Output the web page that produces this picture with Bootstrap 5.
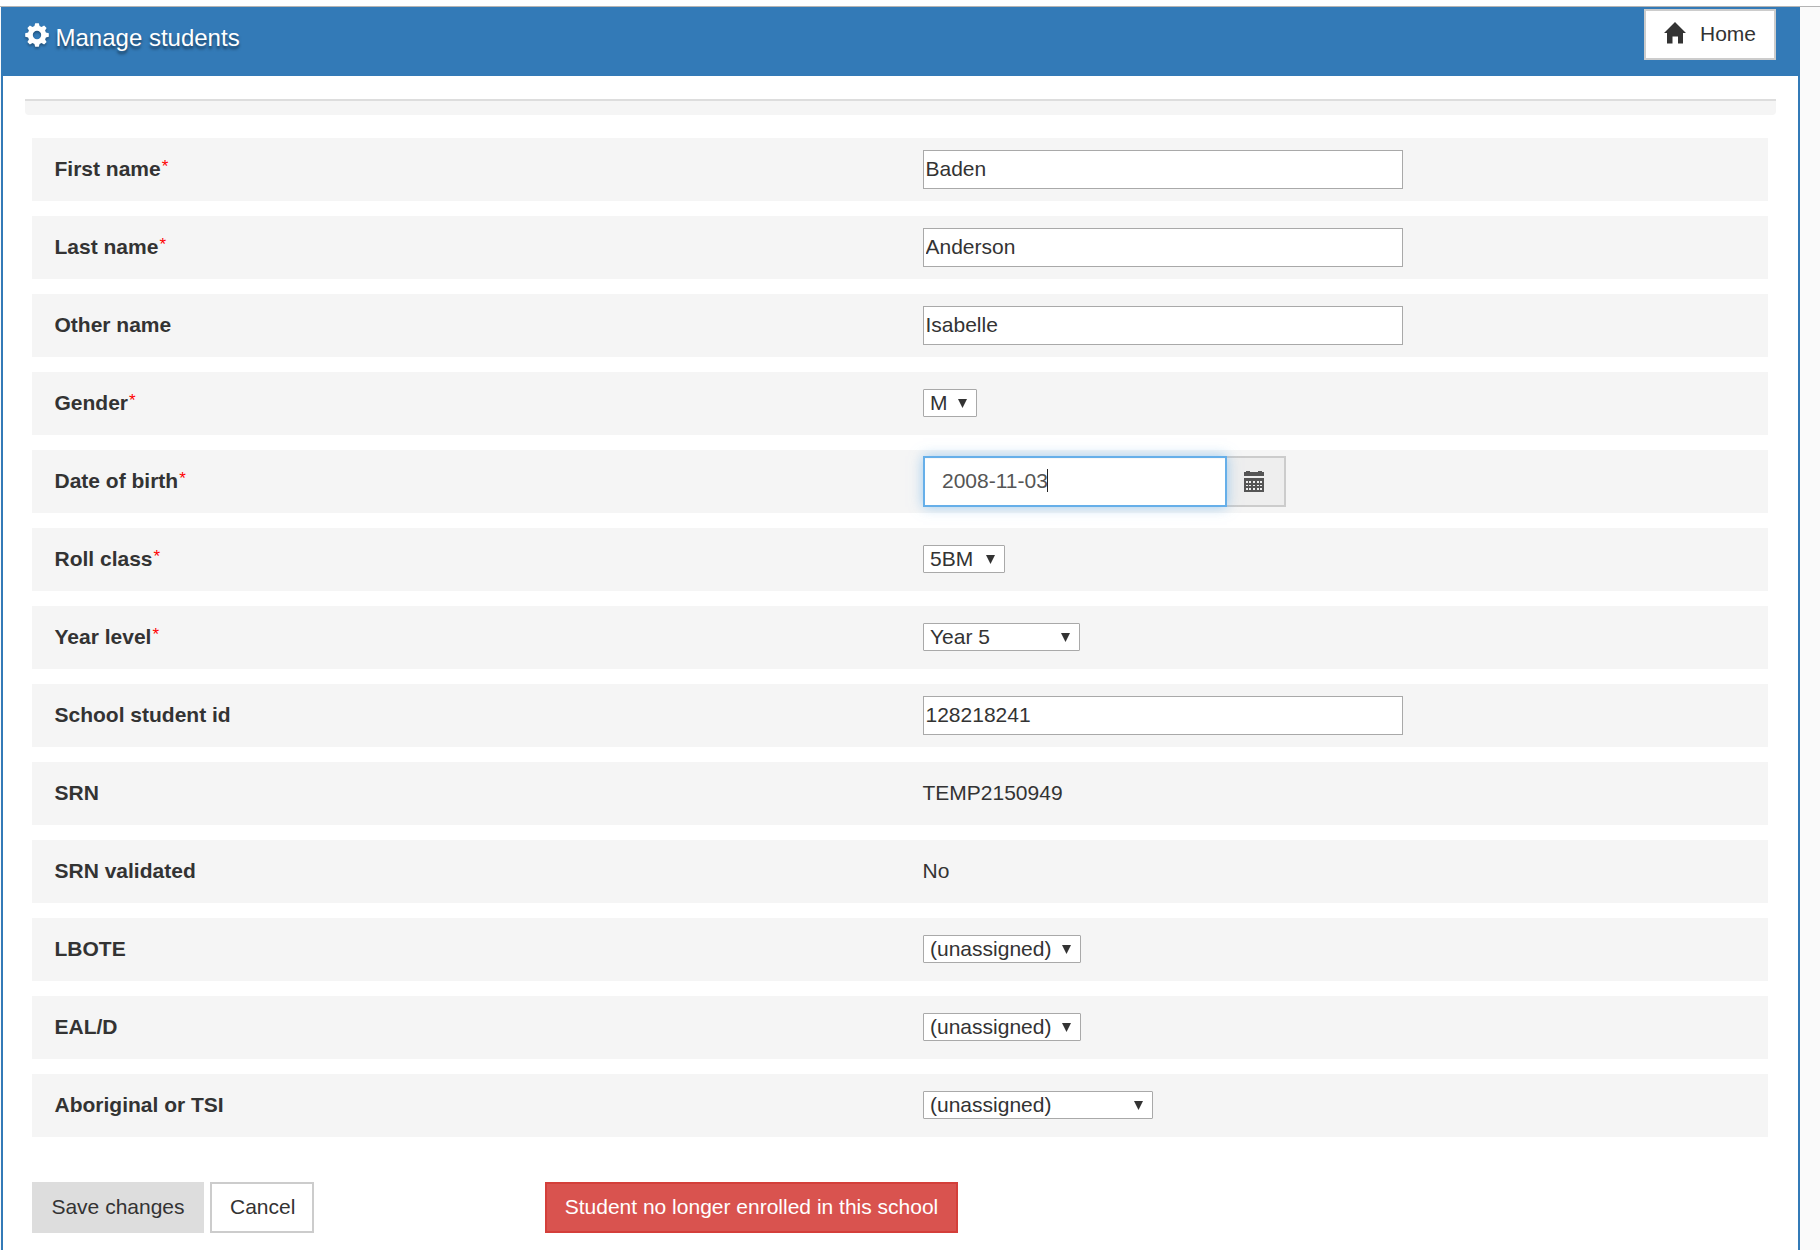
<!DOCTYPE html>
<html lang="en">
<head>
<meta charset="utf-8">
<title>Manage students</title>
<link href="https://cdn.jsdelivr.net/npm/bootstrap@5.3.0/dist/css/bootstrap.min.css" rel="stylesheet">
<style>
body{font-family:"Liberation Sans",Arial,sans-serif;font-size:21px;line-height:30px;color:#333;background:#fafafa;height:1250px;overflow:hidden}
.top-rule{height:7px;background:#fff;border-bottom:1px solid #b4b4b4}
.panel{width:1799px;height:1243px;margin-left:1px;border:2px solid #337ab7;border-top:0;border-bottom:0;background:#fff}
.panel-head{height:69px;background:#337ab7;padding:2px 22px 0}
.panel-title{font-size:24px;line-height:30px;color:#fff;margin-top:14px;text-shadow:0 3px 3px rgba(0,0,0,.5)}
.panel-title svg{filter:drop-shadow(0 2px 1px rgba(0,0,0,.3));margin-right:7px;margin-left:-.5px}
.strip{height:16px;margin:23px 22px 23px;border-top:2px solid #ddd;background:#f5f5f5;border-radius:0 0 4px 4px}
.fields{margin:0 30px 0 29px;gap:15px}
.field-row{height:63px;background:#f5f5f5;--bs-gutter-x:45px}
.field-row label,.field-row .name{font-weight:700}
.field-row label,.field-row .name,.field-row .plain{display:block;margin-bottom:2px}
.req::after{content:"*";color:red;font-weight:400;font-size:17px;line-height:0;margin-left:1px;position:relative;top:-4px}
.txt{width:480px;height:39px;border:1px solid #a9a9a9;padding:0 2px 2px;color:#333;background:#fff;display:block}
.pick{display:inline-grid;vertical-align:top;height:28px;margin-bottom:1px}
.pick>*{grid-area:1/1}
.pick select{appearance:none;height:28px;border:1px solid #a9a9a9;border-radius:1px;background:#fff;color:#333;padding:0 6.5px;line-height:26px}
.pick svg{justify-self:end;margin:10px 10px 0 0;pointer-events:none}
.w-m{width:54px}.w-c{width:82px}.w-y{width:157px}.w-u{width:158px}.w-t{width:230px}
.dob{width:304px;height:51px;border:2px solid #66afe9;padding:9px 17.5px;color:#555;background:#fff;box-shadow:inset 0 1px 1px rgba(0,0,0,.03),0 0 12px rgba(102,175,233,.6);z-index:1;line-height:28px}
.caret{width:1px;height:23px;background:#222;margin:2px 0 0 -.5px}
.addon{width:59px;height:51px;border:2px solid #ccc;border-left:0;background:#eee;padding-right:2px}
.act{height:51px;border:2px solid #ccc;border-radius:0;font-size:21px;line-height:30px;padding:7px 17px 9px;color:#333;background:#fff;white-space:nowrap}
.act-save{background:#ddd;border-color:#ddd;width:172px}
.act-cancel{width:104px;margin-left:6px;padding-left:18px}
.act-leave{background:#d9534f;border-color:#d43f3a;color:#fff;width:413px;margin-left:231px}
.act-home{width:132px;padding:8px 18px}
.act-home svg{margin-top:2.5px}
.act-home span{margin-left:14px}
.actions{margin:45px 29px 0}
</style>
<script src="https://cdn.jsdelivr.net/npm/bootstrap@5.3.0/dist/js/bootstrap.bundle.min.js"></script>
</head>
<body>
<div class="top-rule"></div>
<main class="panel">
  <header class="panel-head d-flex justify-content-between align-items-start">
    <h1 class="panel-title d-flex mb-0 fw-normal">
      <svg width="24" height="24" viewBox="-12 -12 24 24" fill="#fff"><path fill-rule="evenodd" d="M-1.800-11.800H1.800L2.600-8.900 4.500-8.100 7.100-9.600 9.600-7.100 8.100-4.500 8.900-2.600 11.800-1.800V1.800L8.900 2.600 8.100 4.500 9.600 7.100 7.100 9.600 4.500 8.100 2.600 8.900 1.800 11.800H-1.800L-2.600 8.900-4.500 8.100-7.100 9.600-9.600 7.100-8.100 4.500-8.900 2.600-11.800 1.800V-1.800L-8.900-2.600-8.100-4.500-9.600-7.100-7.100-9.600-4.500-8.100-2.600-8.900ZM0-4.200A4.200 4.200 0 1 0 0 4.200 4.200 4.200 0 1 0 0-4.200Z"/></svg>
      <span>Manage students</span>
    </h1>
    <button class="btn act act-home d-flex align-items-start" type="button">
      <svg width="22" height="22" viewBox="0 0 22 22" fill="#333" class="flex-shrink-0"><path d="M11 0 22 11H19V21.500H14V14.500H8.500V21.500H3V11H0Z"/></svg>
      <span>Home</span>
    </button>
  </header>
  <div class="strip"></div>
  <form class="fields d-flex flex-column">
    <div class="row mx-0 field-row align-items-center"><div class="col-6"><label class="req" for="fn">First name</label></div><div class="col-6"><input class="txt" id="fn" value="Baden"></div></div>
    <div class="row mx-0 field-row align-items-center"><div class="col-6"><label class="req" for="ln">Last name</label></div><div class="col-6"><input class="txt" id="ln" value="Anderson"></div></div>
    <div class="row mx-0 field-row align-items-center"><div class="col-6"><label for="on">Other name</label></div><div class="col-6"><input class="txt" id="on" value="Isabelle"></div></div>
    <div class="row mx-0 field-row align-items-center"><div class="col-6"><label class="req" for="ge">Gender</label></div><div class="col-6 d-flex"><span class="pick w-m"><select id="ge"><option>M</option></select><svg width="9" height="9" viewBox="0 0 9 9" fill="#333"><path d="M0 0H9L4.500 9Z"/></svg></span></div></div>
    <div class="row mx-0 field-row align-items-center"><div class="col-6"><span class="name req">Date of birth</span></div><div class="col-6 d-flex">
      <div class="dob d-flex" role="textbox"><span>2008-11-03</span><i class="caret"></i></div>
      <div class="addon d-flex align-items-center justify-content-center"><svg width="20" height="21" viewBox="0 0 20 21" fill="#555" shape-rendering="crispEdges"><path d="M0 1H2V0H6V1H14V0H18V1H20V5H0Z"/><path fill-rule="evenodd" d="M0 7H20V21H0ZM2 10V12H4V10ZM5 10V12H7V10ZM9 10V12H11V10ZM13 10V12H15V10ZM16 10V12H18V10ZM2 14V15H4V14ZM5 14V15H7V14ZM9 14V15H11V14ZM13 14V15H15V14ZM16 14V15H18V14ZM2 17V19H4V17ZM5 17V19H7V17ZM9 17V19H11V17ZM13 17V19H15V17ZM16 17V19H18V17Z"/></svg></div>
    </div></div>
    <div class="row mx-0 field-row align-items-center"><div class="col-6"><label class="req" for="rc">Roll class</label></div><div class="col-6 d-flex"><span class="pick w-c"><select id="rc"><option>5BM</option></select><svg width="9" height="9" viewBox="0 0 9 9" fill="#333"><path d="M0 0H9L4.500 9Z"/></svg></span></div></div>
    <div class="row mx-0 field-row align-items-center"><div class="col-6"><label class="req" for="yl">Year level</label></div><div class="col-6 d-flex"><span class="pick w-y"><select id="yl"><option>Year 5</option></select><svg width="9" height="9" viewBox="0 0 9 9" fill="#333"><path d="M0 0H9L4.500 9Z"/></svg></span></div></div>
    <div class="row mx-0 field-row align-items-center"><div class="col-6"><label for="si">School student id</label></div><div class="col-6"><input class="txt" id="si" value="128218241"></div></div>
    <div class="row mx-0 field-row align-items-center"><div class="col-6"><span class="name">SRN</span></div><div class="col-6"><span class="plain">TEMP2150949</span></div></div>
    <div class="row mx-0 field-row align-items-center"><div class="col-6"><span class="name">SRN validated</span></div><div class="col-6"><span class="plain">No</span></div></div>
    <div class="row mx-0 field-row align-items-center"><div class="col-6"><label for="lb">LBOTE</label></div><div class="col-6 d-flex"><span class="pick w-u"><select id="lb"><option>(unassigned)</option></select><svg width="9" height="9" viewBox="0 0 9 9" fill="#333"><path d="M0 0H9L4.500 9Z"/></svg></span></div></div>
    <div class="row mx-0 field-row align-items-center"><div class="col-6"><label for="ea">EAL/D</label></div><div class="col-6 d-flex"><span class="pick w-u"><select id="ea"><option>(unassigned)</option></select><svg width="9" height="9" viewBox="0 0 9 9" fill="#333"><path d="M0 0H9L4.500 9Z"/></svg></span></div></div>
    <div class="row mx-0 field-row align-items-center"><div class="col-6"><label for="ts">Aboriginal or TSI</label></div><div class="col-6 d-flex"><span class="pick w-t"><select id="ts"><option>(unassigned)</option></select><svg width="9" height="9" viewBox="0 0 9 9" fill="#333"><path d="M0 0H9L4.500 9Z"/></svg></span></div></div>
  </form>
  <div class="actions d-flex">
    <button class="btn act act-save" type="button">Save changes</button>
    <button class="btn act act-cancel" type="button">Cancel</button>
    <button class="btn act act-leave" type="button">Student no longer enrolled in this school</button>
  </div>
</main>
</body>
</html>
